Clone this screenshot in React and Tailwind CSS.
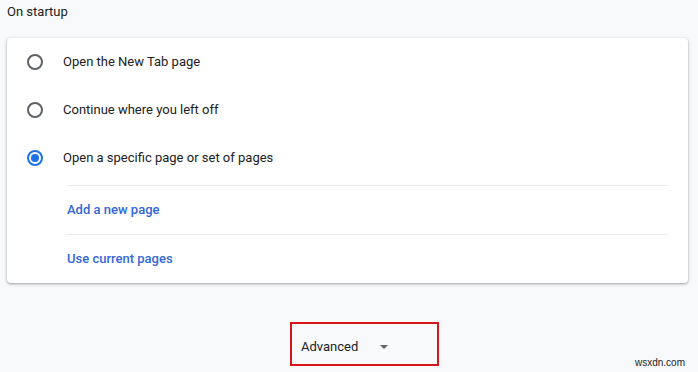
import React, { useState } from "react";

const options = [
  { value: "ntp", label: "Open the New Tab page" },
  { value: "continue", label: "Continue where you left off" },
  { value: "specific", label: "Open a specific page or set of pages" },
];

const Radio = ({ checked }) => (
  <span
    className={`flex h-[16px] w-[16px] items-center justify-center rounded-full border-2 ${
      checked ? "border-[#1a73e8]" : "border-[#5f6368]"
    }`}
  >
    {checked && <span className="h-[8px] w-[8px] rounded-full bg-[#1a73e8]" />}
  </span>
);

export default function App() {
  const [startup, setStartup] = useState("specific");

  return (
    <div className="h-[372px] w-[698px] overflow-hidden bg-[#f8f9fa] font-['Roboto','Liberation_Sans',sans-serif] text-[13px] text-[#202124]">
      <div className="relative px-[7px]">
        <h2 className="pt-[3px] text-[13px] font-normal leading-[18px] text-[#202124]">
          On startup
        </h2>

        <div className="mt-[17px] w-[681px] rounded-[4px] bg-white shadow-[0_1px_2px_rgba(60,64,67,0.3),0_1px_3px_1px_rgba(60,64,67,0.15)]">
          <div className="pb-[3px]">
            {options.map((o) => (
              <label
                key={o.value}
                className="flex h-[48px] cursor-pointer items-center"
                onClick={() => setStartup(o.value)}
              >
                <span className="ml-[20px] mr-[20px]">
                  <Radio checked={startup === o.value} />
                </span>
                <span className="leading-[18px]">{o.label}</span>
              </label>
            ))}
          </div>

          <div className="ml-[60px] mr-[20px]">
            <div className="flex h-[49px] items-center border-t border-[#e8eaed] font-medium text-[#3367d6]">
              Add a new page
            </div>
            <div className="flex h-[49px] items-center border-t border-[#e8eaed] font-medium text-[#3367d6]">
              Use current pages
            </div>
          </div>
        </div>

        <div className="mt-[39px] flex">
          <button className="ml-[283px] flex h-[44px] w-[149px] items-center border-2 border-[#d7141b] pl-[9px] pt-[5px] text-[13px] text-[#202124]">
            <span>Advanced</span>
            <span className="ml-[22px] mt-[1px] h-0 w-0 border-x-[4px] border-t-[4px] border-x-transparent border-t-[#5f6368]" />
          </button>
        </div>

        <span className="absolute right-[13px] top-[355px] text-[10px] text-[#222] font-['Liberation_Sans',sans-serif]">
          wsxdn.com
        </span>
      </div>
    </div>
  );
}
